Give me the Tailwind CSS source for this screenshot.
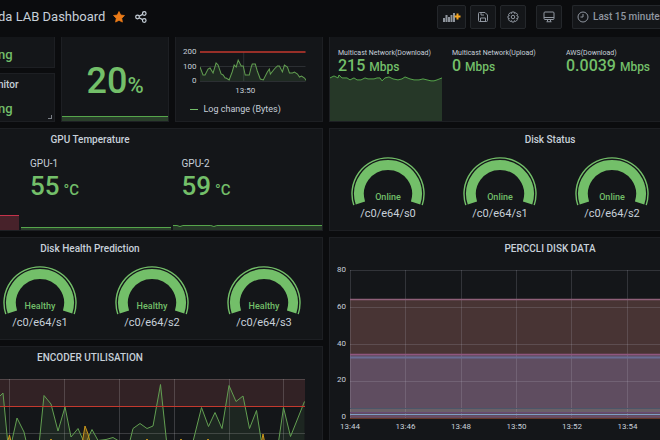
<!DOCTYPE html>
<html lang="en">
<head>
    <meta charset="UTF-8">
    <meta name="viewport" content="width=device-width, initial-scale=1.0">
    <title>LAB Dashboard</title>

    <!-- Tailwind CSS -->
    <script src="https://cdn.jsdelivr.net/npm/@tailwindcss/browser@4"></script>
</head>
<body class="bg-[#0b0c0e] font-['Roboto',sans-serif] text-[#c7d0d9] h-screen overflow-hidden flex flex-col">

    <!-- Top bar -->
    <header class="flex items-center justify-between h-[37px] pb-1 shrink-0 whitespace-nowrap">
        <div class="flex items-center">
            <h1 class="-ml-0.5 text-[13px] leading-4">da LAB Dashboard</h1>
            <button class="ml-2" aria-label="Mark as favorite">
                <svg class="w-3 h-3" viewBox="0 0 24 24" fill="#eb7b18"><path d="M12 1l3.400 7 7.600 1.100-5.500 5.400 1.300 7.700L12 18.600l-6.800 3.600 1.300-7.700L1 9.100 8.600 8z" stroke="#eb7b18" stroke-width="1.500" stroke-linejoin="round"/></svg>
            </button>
            <button class="ml-2.5" aria-label="Share dashboard">
                <svg class="w-3 h-3" viewBox="0 0 24 24" fill="none" stroke="#c7d0d9" stroke-width="2.400"><circle cx="5" cy="12" r="3.600"/><circle cx="18.500" cy="5" r="3.600"/><circle cx="18.500" cy="19" r="3.600"/><path d="M8.200 10.400l7-3.700M8.200 13.600l7 3.700"/></svg>
            </button>
        </div>
        <div class="flex gap-1 text-[#9097a1]">
            <button class="w-[29px] h-6 flex items-center justify-center rounded-xs border border-[#24272b] bg-[#141619]" aria-label="Add panel">
                <svg class="w-[18px] h-3" viewBox="0 0 18 12"><path fill="#8e949c" d="M0 7h2v4H0zM2.500 4h2v7h-2zM5 6h2v5H5zM7.500 4h2v7h-2zM10 2h2v9h-2z"/><path d="M14.500 2.500v6M11.500 5.500h6" stroke="#f5a623" stroke-width="2"/></svg>
            </button>
            <button class="w-[26px] h-6 flex items-center justify-center rounded-xs border border-[#24272b] bg-[#141619]" aria-label="Save dashboard">
                <svg class="w-3 h-3" viewBox="0 0 24 24" fill="none" stroke="currentColor" stroke-width="2" stroke-linejoin="round"><path d="M5 3h11l5 5v11a2 2 0 0 1-2 2H5a2 2 0 0 1-2-2V5a2 2 0 0 1 2-2z"/><path d="M8 3v5h6M7 21v-7h10v7"/></svg>
            </button>
            <button class="w-[26px] h-6 flex items-center justify-center rounded-xs border border-[#24272b] bg-[#141619]" aria-label="Dashboard settings">
                <svg class="w-3 h-3" viewBox="0 0 24 24" fill="none" stroke="currentColor" stroke-width="2" stroke-linejoin="round"><path d="M9.500 2h5l.7 3 2.600-1.600 3.300 3.300L19.400 9.300l2.600.7v4.500l-2.800.6 1.700 2.500-3.400 3.400-2.600-1.700-.7 2.700h-4.500l-.7-2.700-2.600 1.700L3 17.600l1.700-2.500-2.700-.6V10l2.700-.7L3 6.700l3.400-3.300L9 5z"/><circle cx="12" cy="12" r="3.500"/></svg>
            </button>
            <button class="ml-1.5 w-[26px] h-6 flex items-center justify-center rounded-xs border border-[#24272b] bg-[#141619]" aria-label="Cycle view mode">
                <svg class="w-3 h-3" viewBox="0 0 24 24" fill="none" stroke="currentColor" stroke-width="2" stroke-linejoin="round"><rect x="2" y="2" width="20" height="15" rx="2"/><path d="M2 13h20M9 17v4M15 17v4M7 21.500h10"/></svg>
            </button>
            <button class="ml-1.5 w-[88px] h-6 flex items-center gap-1 pl-1 rounded-l-xs border border-r-0 border-[#24272b] bg-[#141619] overflow-hidden text-[10px] font-medium">
                <svg class="w-3 h-3 shrink-0" viewBox="0 0 24 24" fill="none" stroke="currentColor" stroke-width="2"><circle cx="12" cy="12" r="10"/><path d="M12 6v6H7"/></svg>
                Last 15 minutes
            </button>
        </div>
    </header>

    <main class="grow grid grid-cols-[323fr_331fr] grid-rows-[85px_103px_103px_auto] gap-1.5 min-h-0">

        <!-- Row 1, left -->
        <div class="grid grid-cols-[55fr_109fr_148fr] gap-1.5 min-w-0">
            <div class="grid grid-rows-[31px_auto] gap-[5px]">
                <section class="bg-[#141619] border border-t-0 border-l-0 border-[#1d1f23] overflow-hidden">
                    <p class="-ml-0.5 text-[13px] leading-4 pt-2.5 font-medium text-[#73bf69]">ng</p>
                </section>
                <section class="relative bg-[#141619] border border-l-0 border-[#1d1f23] overflow-hidden">
                    <h2 class="-ml-0.5 pt-px text-[10px] leading-5 font-medium">nitor</h2>
                    <p class="-ml-0.5 text-[13px] leading-4 pt-1.5 font-medium text-[#73bf69]">ng</p>
                    <span class="absolute right-0.5 bottom-0.5 w-1 h-1 border-r border-b border-[#7b8087]"></span>
                </section>
            </div>
            <section class="bg-[#141619] border border-t-0 border-[#1d1f23] flex flex-col">
                <p class="grow flex items-baseline justify-center pt-6 text-[#73bf69] font-medium"><span class="text-4xl leading-10">20</span><span class="text-[22px] leading-10">%</span></p>
                <div class="h-[5px] bg-[#2a3f2b] border-t border-[#56a64b]"></div>
            </section>
            <section class="bg-[#141619] border border-t-0 border-[#1d1f23] pl-1 pr-4 overflow-hidden">
                <div class="flex gap-1 pt-2.5">
                    <div class="w-4 flex flex-col justify-between text-right text-[8px] leading-[10px] h-[39px]"><span>200</span><span>100</span><span>0</span></div>
                    <svg class="grow min-w-0 h-[39px]" viewBox="0 0 105 39" preserveAspectRatio="none" fill="none">
                        <path d="M0 19.500h105M0 34.500h105M43.500 5v29" stroke="#2c2f33"/>
                        <path d="M0 20l3 8h2l3-6 2-1 3 5 3-10 2 2 3 9 2 1 2 3 1 0 3 2 3-8 2-7 2 2 2-7 3 6 2 0 2 9h4l2-8 1-3h3l2 7 3 8 3 1 4-8 2-3 1 5 4-5 3-3 2 0 3 6 2-7 3 2 2 6h3l2-1 3 2 2 3 2-1 3 2 2 3 2-5h3l2 2V34H0z" fill="#73bf69" fill-opacity=".12"/>
                        <path d="M0 20l3 8h2l3-6 2-1 3 5 3-10 2 2 3 9 2 1 2 3 1 0 3 2 3-8 2-7 2 2 2-7 3 6 2 0 2 9h4l2-8 1-3h3l2 7 3 8 3 1 4-8 2-3 1 5 4-5 3-3 2 0 3 6 2-7 3 2 2 6h3l2-1 3 2 2 3 2-1 3 2 2 3 2-5h3l2 2" stroke="#629e51"/>
                        <path d="M0 5h105" stroke="#c4392e" stroke-width="1.500"/>
                    </svg>
                </div>
                <p class="text-[8px] leading-[10px] text-center pl-1">13:50</p>
                <p class="flex items-center gap-[5px] pl-2.5 pt-[7px] text-[9px] leading-3"><span class="w-2 h-px bg-[#73bf69]"></span>Log change (Bytes)</p>
            </section>
        </div>

        <!-- Network -->
        <section class="bg-[#141619] border border-t-0 border-r-0 border-[#1d1f23] overflow-hidden flex whitespace-nowrap">
            <div class="w-28 shrink-0 mr-0.5 pt-3 flex flex-col">
                <h3 class="text-[7px] leading-2 pl-2">Multicast Network(Download)</h3>
                <p class="pl-2 text-base leading-[18px] font-medium text-[#73bf69]">215 <span class="text-xs leading-4">Mbps</span></p>
                <svg class="w-full h-[47px] mt-auto" viewBox="0 0 112 47" preserveAspectRatio="none">
                    <path d="M0 3l4-2 4 2 1-3 3 3h5l3 2 4-2 3 2 4 0 4-2 3 1 3 0 3 0 3-1 3 0 2 3 3-3 4-1 4 2 5 1 4-1 3-2 5 2 4 1 5 0 4-1 4 1 4 1 3 0 3-1L112 3V47H0z" fill="#263828"/>
                    <path d="M0 3l4-2 4 2 1-3 3 3h5l3 2 4-2 3 2 4 0 4-2 3 1 3 0 3 0 3-1 3 0 2 3 3-3 4-1 4 2 5 1 4-1 3-2 5 2 4 1 5 0 4-1 4 1 4 1 3 0 3-1L112 3" fill="none" stroke="#56a64b"/>
                </svg>
            </div>
            <div class="w-28 shrink-0 mr-0.5 pt-3">
                <h3 class="text-[7px] leading-2 pl-2">Multicast Network(Upload)</h3>
                <p class="pl-2 text-base leading-[18px] font-medium text-[#73bf69]">0 <span class="text-xs leading-4">Mbps</span></p>
            </div>
            <div class="w-28 shrink-0 pt-3">
                <h3 class="text-[7px] leading-2 pl-2">AWS(Download)</h3>
                <p class="pl-2 text-base leading-[18px] font-medium text-[#73bf69]">0.0039 <span class="text-xs leading-4">Mbps</span></p>
            </div>
        </section>

        <!-- GPU Temperature -->
        <section class="bg-[#141619] border border-l-0 border-[#1d1f23] overflow-hidden flex flex-col">
            <h2 class="w-[180px] pt-[5px] text-center text-[10px] leading-3 font-medium">GPU Temperature</h2>
            <div class="grow grid grid-cols-[19fr_149fr_149fr] gap-0.5">
                <div class="flex flex-col justify-end"><div class="h-[15px] bg-[#47222a] border-t border-[#c4324a]"></div></div>
                <div class="pt-3 flex flex-col">
                    <h3 class="pl-[9px] text-[10px] leading-3">GPU-1</h3>
                    <p class="pl-[9px] flex items-baseline gap-1 text-[26px] leading-8 font-medium text-[#73bf69]">55<span class="text-[15px] leading-4">°C</span></p>
                    <div class="mt-auto h-[3px] bg-[#2a3f2b] border-t border-[#56a64b]"></div>
                </div>
                <div class="pt-3 flex flex-col">
                    <h3 class="pl-[9px] text-[10px] leading-3">GPU-2</h3>
                    <p class="pl-[9px] flex items-baseline gap-1 text-[26px] leading-8 font-medium text-[#73bf69]">59<span class="text-[15px] leading-4">°C</span></p>
                    <svg class="mt-auto w-full h-[5px]" viewBox="0 0 150 5" preserveAspectRatio="none"><path d="M0 1h150v4H0z" fill="#263828"/><path d="M0 .5h4l3 1 3-1h28l3 1 3-1h106" fill="none" stroke="#56a64b"/></svg>
                </div>
            </div>
        </section>

        <!-- Disk Status -->
        <section class="bg-[#141619] border border-r-0 border-[#1d1f23] overflow-hidden">
            <h2 class="w-[440px] pt-[5px] text-center text-[10px] leading-3 font-medium">Disk Status</h2>
            <div id="disk-status" class="flex pl-0.5 pt-[11px]"></div>
        </section>

        <!-- Disk Health Prediction -->
        <section class="bg-[#141619] border border-l-0 border-[#1d1f23] overflow-hidden">
            <h2 class="w-[180px] pt-[5px] text-center text-[10px] leading-3 font-medium">Disk Health Prediction</h2>
            <div id="disk-health" class="flex -ml-4 pt-[11px]"></div>
        </section>

        <!-- PERCCLI Disk Data -->
        <section class="row-span-2 bg-[#141619] border border-b-0 border-r-0 border-[#1d1f23] overflow-hidden">
            <h2 class="w-[440px] pt-[5px] text-center text-[10px] leading-3 font-medium">PERCCLI DISK DATA</h2>
            <div class="flex gap-1 pt-2.5">
                <div class="w-4 h-[157px] flex flex-col justify-between text-right text-[8px] leading-[10px]"><span>80</span><span>60</span><span>40</span><span>20</span><span>0</span></div>
                <svg class="grow min-w-0 h-[155px]" viewBox="0 0 310 155" preserveAspectRatio="none" fill="none">
                    <path d="M0 34h310v120H0z" fill="#483434"/>
                    <path d="M0 89h310v65H0z" fill="#5f4d60"/>
                    <path d="M0 144h310v4H0z" fill="#6b6168"/>
                    <path d="M0 5.500h310M0 42.500h310M0 79.500h310M0 116.500h310M.5 5v149M55.500 5v149M111.500 5v149M166.500 5v149M221.500 5v149M277.500 5v149" stroke="#c8c8dc" stroke-opacity=".17"/>
                    <path d="M0 34.500h310" stroke="#8f6079" stroke-width="1.500"/>
                    <path d="M0 89.500h310" stroke="#90567f" stroke-width="1.500"/>
                    <path d="M0 92.500h310" stroke="#6a6c94" stroke-width="2"/>
                    <path d="M0 143.500h310" stroke="#4b5568"/>
                    <path d="M0 147.500h310" stroke="#694a72"/>
                    <path d="M0 149.500h310" stroke="#809cc4"/>
                    <path d="M0 151.500h310" stroke="#704a68"/>
                    <path d="M0 153.500h310" stroke="#663629"/>
                </svg>
            </div>
            <div class="flex text-[8px] leading-[10px] text-center -ml-2">
                <span class="w-14 shrink-0">13:44</span><span class="w-[55px] shrink-0">13:46</span><span class="w-14 shrink-0">13:48</span><span class="w-[55px] shrink-0">13:50</span><span class="w-14 shrink-0">13:52</span><span class="w-[55px] shrink-0">13:54</span>
            </div>
        </section>

        <!-- Encoder Utilisation -->
        <section class="bg-[#141619] border border-l-0 border-b-0 border-[#1d1f23] overflow-hidden pr-[17px]">
            <h2 class="w-[180px] pt-[5px] text-center text-[10px] leading-3 font-medium">ENCODER UTILISATION</h2>
            <svg class="w-full h-[62px] mt-[15px]" viewBox="0 379 305 62" preserveAspectRatio="none" fill="none">
                <path d="M0 379h305v28H0z" fill="#322225"/>
                <path d="M0 379.500h305M0 433.500h305M9.500 379v62M64.500 379v62M119.500 379v62M174.500 379v62M229.500 379v62M283.500 379v62" stroke="#d8d9da" stroke-opacity=".2"/>
                <path d="M-2 445V397L0 396l3-3 5 52h3l6-27 7 14 3 13h12l5-49.500 7 8.500 7 27 7-24 6 30 7-8.500 7 16 7-15 6 11 8-1 7-2 5 3h12l3-12 7-5 7 5 6-2.500 7.500-41.500 6.500 61h25l9.500-38 7 19 6.500-14 7 16 7-43 7 16 7-5.500 6.500 32.500 7-18 5.500 35h16l5.500-38 7 29 14-35" fill="none" stroke="#629e51"/>
                <path d="M0 396l3-3 5 52h3l6-27 7 14 3 13h12l5-49.500 7 8.500 7 27 7-24 6 30 7-8.500 7 16 7-15 6 11 8-1 7-2 5 3h12l3-12 7-5 7 5 6-2.500 7.500-41.500 6.500 61h25l9.500-38 7 19 6.500-14 7 16 7-43 7 16 7-5.500 6.500 32.500 7-18 5.500 35h16l5.500-38 7 29 14-35V445H0z" fill="#73bf69" fill-opacity=".1"/>
                <path d="M7 444l2.500-9 2 9M49 442l2-3 2 3M82 444l3-18 3 8 2 8M145 442l2-3 2 3M179 442l2-3 2 3M206 442l2-3 2 3M261 444l2-10 2 10" fill="#c9971c" fill-opacity=".35" stroke="#c9971c"/>
                <path d="M0 406.500h305" stroke="#c4392e"/>
            </svg>
        </section>
    </main>

    <!-- One gauge: thin threshold ring, value arc, value and label -->
    <template id="gauge-template">
        <div class="w-28 shrink-0 flex flex-col items-center">
            <div class="relative w-[74px] h-[50px]">
                <svg class="w-full h-full" viewBox="0 0 74 50" fill="none" stroke="#73bf69">
                    <path d="M2.800 48.100A36 36 0 1 1 71.200 48.100" stroke-width="1.400"/>
                    <path d="M9.400 45.900A29 29 0 1 1 64.600 45.900" stroke-width="9.800"/>
                </svg>
                <span class="gauge-value absolute inset-x-0 top-8 text-center text-[9px] leading-4 font-medium text-[#73bf69]"></span>
            </div>
            <span class="gauge-label pt-px text-[11px] leading-3"></span>
        </div>
    </template>

    <script>
        function renderGauges(id, value, disks) {
            const box = document.getElementById(id);
            const template = document.getElementById('gauge-template');
            disks.forEach(disk => {
                const gauge = template.content.cloneNode(true);
                gauge.querySelector('.gauge-value').textContent = value;
                gauge.querySelector('.gauge-label').textContent = disk;
                box.appendChild(gauge);
            });
        }

        renderGauges('disk-status', 'Online', ['/c0/e64/s0', '/c0/e64/s1', '/c0/e64/s2']);
        renderGauges('disk-health', 'Healthy', ['/c0/e64/s1', '/c0/e64/s2', '/c0/e64/s3']);
    </script>
</body>
</html>
